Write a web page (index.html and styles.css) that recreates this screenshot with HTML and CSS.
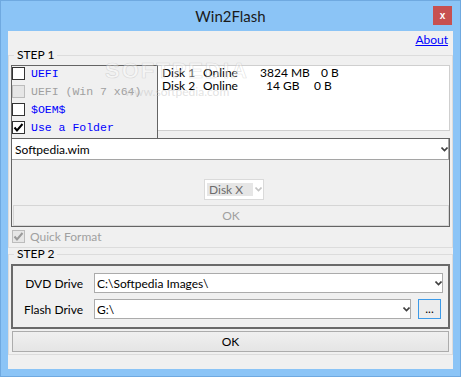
FILE: index.html
```html
<!DOCTYPE html>
<html lang="en">
<head>
  <meta charset="UTF-8">
  <title>Win2Flash</title>
  <link rel="stylesheet" href="styles.css">
</head>
<body>
  <div class="window">
    <div class="titlebar">
      <span class="title">Win2Flash</span>
      <button class="close-button">x</button>
    </div>

    <div class="client">
      <div class="about-row"><a href="#">About</a></div>

      <fieldset class="group step1">
        <legend>STEP 1</legend>

        <div class="sources">
          <ul class="checklist">
            <li><span class="check"></span>UEFI</li>
            <li class="disabled"><span class="check"></span>UEFI (Win 7 x64)</li>
            <li><span class="check"></span>$OEM$</li>
            <li>
              <span class="check">
                <svg viewBox="0 0 11 11" width="11" height="11"><path d="M1.5 5.5 L4 8.5 L9.5 2"/></svg>
              </span>Use a Folder
            </li>
          </ul>
          <div class="disk-list">
            <div class="disk-row row-a"><span>Disk 1</span><span>Online</span><span>3824 MB</span><span>0 B</span></div>
            <div class="disk-row row-b"><span>Disk 2</span><span>Online</span><span>14 GB</span><span>0 B</span></div>
          </div>
        </div>

        <div class="image-panel">
          <div class="combo wim-combo">
            <span class="combo-text">Softpedia.wim</span>
            <svg class="arrow" viewBox="0 0 7 5" width="7" height="5"><path d="M0.5 0.5 L3.5 3.5 L6.5 0.5"/></svg>
          </div>
          <div class="combo disk-combo">
            <span class="combo-text">Disk X</span>
            <svg class="arrow" viewBox="0 0 7 5" width="7" height="5"><path d="M0.5 0.5 L3.5 3.5 L6.5 0.5"/></svg>
          </div>
          <button class="btn apply-button" disabled>OK</button>
        </div>

        <label class="quick-format">
          <span class="check">
            <svg viewBox="0 0 11 11" width="11" height="11"><path d="M1.5 5.5 L4 8.5 L9.5 2"/></svg>
          </span>Quick Format
        </label>
      </fieldset>

      <fieldset class="group step2">
        <legend>STEP 2</legend>
        <div class="drive-panel">
          <div class="drive-row">
            <span class="drive-label">DVD Drive</span>
            <div class="combo drive-combo">
              <span class="combo-text">C:\Softpedia Images\</span>
              <svg class="arrow" viewBox="0 0 7 5" width="7" height="5"><path d="M0.5 0.5 L3.5 3.5 L6.5 0.5"/></svg>
            </div>
          </div>
          <div class="drive-row">
            <span class="drive-label">Flash Drive</span>
            <div class="combo drive-combo">
              <span class="combo-text">G:\</span>
              <svg class="arrow" viewBox="0 0 7 5" width="7" height="5"><path d="M0.5 0.5 L3.5 3.5 L6.5 0.5"/></svg>
            </div>
            <button class="btn browse-button">...</button>
          </div>
        </div>
        <button class="btn ok-button">OK</button>
      </fieldset>
    </div>

    <!-- softpedia watermark over the list -->
    <div class="watermark">
      <span class="wm-big">SOFTPEDIA</span>
      <span class="wm-small">www.softpedia.com</span>
    </div>
  </div>
</body>
</html>
```

FILE: styles.css
```css
* {
  box-sizing: border-box;
}

body {
  margin: 0;
  font-family: 'Lato', 'Liberation Sans', sans-serif;
  font-size: 12px;
  color: #000;
}

.window {
  position: relative;
  width: 461px;
  height: 377px;
  background: #8bc4f6;
  border: 1px solid #6fa9e0;
  display: flex;
  flex-direction: column;
}

/* title bar */
.titlebar {
  height: 30px;
  display: grid;
  grid-template-columns: 1fr auto 1fr;
  align-items: start;
}

.title {
  grid-column: 2;
  font-size: 15px;
  line-height: 31px;
  color: #1a1a1a;
}

.close-button {
  grid-column: 3;
  justify-self: end;
  width: 19px;
  height: 19px;
  margin: 5px 8px 0 0;
  padding: 0;
  border: none;
  background: #c75050;
  color: #fff;
  font: bold 10px 'Liberation Sans', sans-serif;
  line-height: 18px;
}

.client {
  flex: 1;
  margin: 0 7px 7px;
  background: #f0f0f0;
  display: flex;
  flex-direction: column;
}

.about-row {
  height: 18px;
  display: flex;
  justify-content: flex-end;
  padding: 2px 5px 0 0;
}

.about-row a {
  color: #0000ff;
  line-height: 14px;
}

/* group boxes */
.group {
  margin: 0;
  border: 1px solid #dcdcdc;
  min-width: 0;
}

.group legend {
  margin-left: 3px;
  padding: 0 3px;
  line-height: 12px;
}

.step1 {
  padding: 4px 2px 1px 2px;
}

.step2 {
  padding: 4px 2px 2px 2px;
}

.sources {
  display: flex;
  margin-bottom: -1px;
}

.checklist {
  list-style: none;
  margin: 0;
  padding: 0;
  width: 147px;
  height: 74px;
  border: 1px solid #646464;
  font-family: 'Liberation Mono', monospace;
  font-size: 11.5px;
  color: #0000ff;
}

.checklist li {
  height: 18px;
  display: flex;
  align-items: flex-start;
  line-height: 16px;
}

.checklist li.disabled {
  color: #a0a0a0;
}

.check {
  width: 13px;
  height: 13px;
  margin: 1px 6px 0 0;
  border: 1px solid #333;
  background: #fff;
  display: flex;
  align-items: center;
  justify-content: center;
  flex-shrink: 0;
}

.check svg path {
  fill: none;
  stroke: #000;
  stroke-width: 2;
}

.checklist li.disabled .check {
  border-color: #bcbcbc;
  background: #e6e6e6;
}

.disk-list {
  flex: 1;
  height: 66px;
  border: 1px solid #cfcfcf;
  border-left: none;
  background: #fff;
  padding-left: 4px;
}

.disk-row {
  display: grid;
  line-height: 13px;
  white-space: nowrap;
}

.row-a {
  grid-template-columns: 41px 57px 61px auto;
}

.row-b {
  grid-template-columns: 41px 63px 48px auto;
}

/* image + target panel */
.image-panel {
  position: relative;
  border: 1px solid #646464;
  display: flex;
  flex-direction: column;
  align-items: flex-start;
}

.combo {
  display: flex;
  align-items: center;
  background: #fff;
}

.combo-text {
  flex: 1;
  white-space: nowrap;
}

.arrow path {
  fill: none;
  stroke: #404040;
  stroke-width: 1.6;
}

.wim-combo {
  align-self: stretch;
  height: 21px;
  padding-left: 3px;
  border-bottom: 1px solid #a5a5a5;
  border-right: 1px solid #a5a5a5;
}

.disk-combo {
  width: 60px;
  height: 21px;
  margin: 19px 0 0 192px;
  padding: 3px 1px 3px 2px;
  border: 1px solid #dadada;
}

.disk-combo .combo-text {
  align-self: stretch;
  background: #e6e6e6;
  color: #6d6d6d;
  padding-left: 2px;
  line-height: 14px;
}

.disk-combo .arrow {
  margin-left: 2px;
}

.disk-combo .arrow path {
  stroke: #c4c4c4;
}

.btn {
  font-family: inherit;
  font-size: 12px;
  padding: 0;
  color: #000;
  border: 1px solid #acacac;
  background: linear-gradient(#f0f0f0, #e5e5e5);
}

.apply-button {
  align-self: stretch;
  height: 21px;
  margin: 5px 0 0 1px;
  border-color: #d5d5d5;
  background: #f0f0f0;
  color: #a0a0a0;
}

.quick-format {
  height: 19px;
  display: flex;
  align-items: center;
  color: #a0a0a0;
}

.quick-format .check {
  margin: 0 5px 0 1px;
  border-color: #bcbcbc;
  background: #e6e6e6;
}

.quick-format .check svg path {
  stroke: #9a9a9a;
}

/* step 2 */
.drive-panel {
  border: 2px solid #6a6a6a;
  padding: 7px 0 8px;
  display: flex;
  flex-direction: column;
  gap: 6px;
}

.drive-row {
  display: flex;
  align-items: center;
  height: 20px;
  padding-right: 5px;
}

.drive-label {
  width: 70px;
  margin-right: 11px;
  text-align: right;
}

.drive-combo {
  flex: 1;
  height: 20px;
  padding-left: 2px;
  border: 1px solid #ababab;
}

.drive-row .browse-button {
  width: 23px;
  height: 20px;
  margin: 0 2px 0 7px;
  border-color: #3c9ae8;
  background: #ececec;
  line-height: 14px;
}

.ok-button {
  display: block;
  width: calc(100% - 2px);
  height: 21px;
  margin: 2px 1px 0;
}

/* watermark */
.watermark {
  position: absolute;
  left: 104px;
  top: 57px;
  display: flex;
  flex-direction: column;
  align-items: center;
  pointer-events: none;
}

.wm-big {
  font: bold 22px 'Liberation Sans', sans-serif;
  letter-spacing: 2px;
  color: rgba(255, 255, 255, 0.4);
  -webkit-text-stroke: 0.7px rgba(170, 170, 170, 0.35);
}

.wm-small {
  font-size: 12px;
  color: rgba(190, 190, 190, 0.45);
}
```
